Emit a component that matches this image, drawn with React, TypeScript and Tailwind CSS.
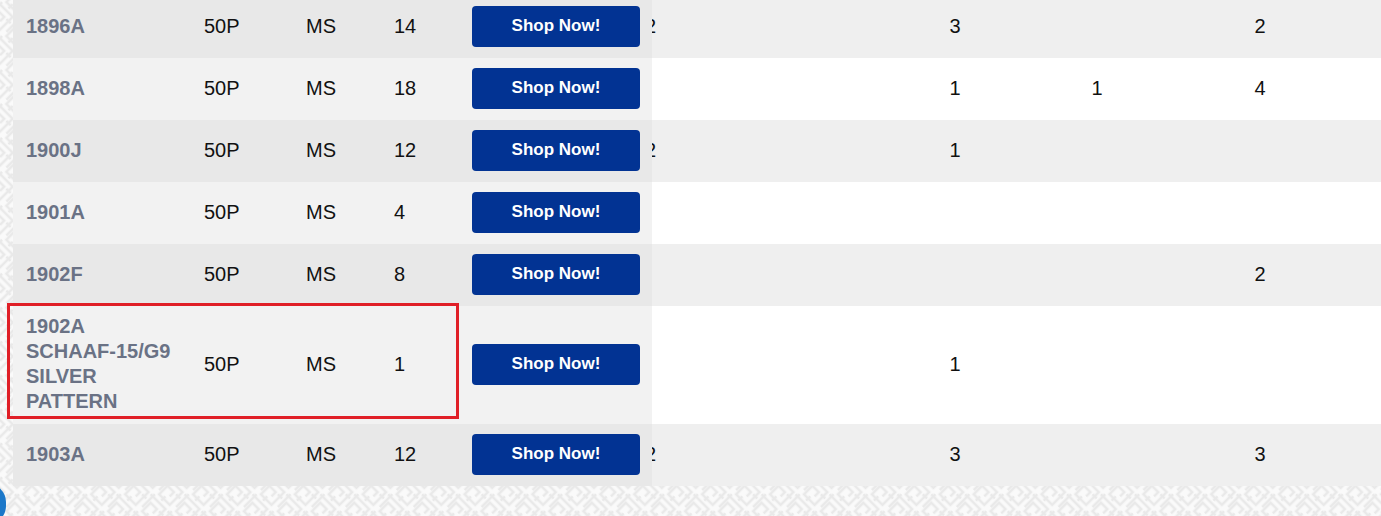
import React from "react";

type Row = {
  name: string[];
  qty: string;
  a?: string;
  b?: string;
  c?: string;
  d?: string;
  tall?: boolean;
};

const rows: Row[] = [
  { name: ["1896A"], qty: "14", a: "2", b: "3", d: "2" },
  { name: ["1898A"], qty: "18", b: "1", c: "1", d: "4" },
  { name: ["1900J"], qty: "12", a: "2", b: "1" },
  { name: ["1901A"], qty: "4" },
  { name: ["1902F"], qty: "8", d: "2" },
  { name: ["1902A", "SCHAAF-15/G9", "SILVER", "PATTERN"], qty: "1", b: "1", tall: true },
  { name: ["1903A"], qty: "12", a: "2", b: "3", d: "3" },
];

function Pattern() {
  return (
    <svg className="absolute inset-0 h-full w-full" xmlns="http://www.w3.org/2000/svg">
      <defs>
        <pattern id="maze" width="24" height="24" patternUnits="userSpaceOnUse" patternTransform="rotate(45)">
          <rect width="24" height="24" fill="#fafafa" />
          <path
            d="M0 3H21V21H6V9H15V15M3 0V18M12 24V18M24 9H18"
            fill="none"
            stroke="#e9e9e9"
            strokeWidth="2.5"
          />
        </pattern>
      </defs>
      <rect width="100%" height="100%" fill="url(#maze)" />
    </svg>
  );
}

export default function App() {
  return (
    <div
      className="relative h-[516px] w-[1381px] overflow-hidden bg-[#fafafa]"
      style={{ fontFamily: '"Liberation Sans", Arial, sans-serif' }}
    >
      <Pattern />
      <div className="relative ml-[13px] mt-[-4px] flex flex-col">
        {rows.map((r, i) => {
          const odd = i % 2 === 0;
          return (
            <div key={i} className={`flex ${r.tall ? "h-[118px]" : "h-[62px]"}`}>
              <div
                className={`relative z-10 flex w-[639px] shrink-0 items-center pb-[2px] ${
                  odd ? "bg-[#e8e8e8]" : "bg-[#f2f2f2]"
                }`}
              >
                <div className="w-[178px] pl-[13px] pr-[2px] text-[20px] font-bold leading-[25px] text-[#6a7285]">
                  {r.name.map((n, k) => (
                    <div key={k}>{n}</div>
                  ))}
                </div>
                <div className="w-[102px] pl-[13px] text-[20px] text-[#111]">50P</div>
                <div className="w-[88px] pl-[13px] text-[20px] text-[#111]">MS</div>
                <div className="w-[78px] pl-[13px] text-[20px] text-[#111]">{r.qty}</div>
                <div className="pl-[13px]">
                  <button className="flex h-[41px] w-[168px] items-center justify-center rounded-[4px] bg-[#023393] text-[17px] font-bold text-white">
                    Shop Now!
                  </button>
                </div>
              </div>
              <div
                className={`-ml-[12px] flex flex-1 items-center pb-[2px] text-[20px] text-[#111] ${
                  odd ? "bg-[#efefef]" : "bg-white"
                }`}
              >
                <div className="w-[240px] pl-[5px]">{r.a}</div>
                <div className="w-[150px] text-center">{r.b}</div>
                <div className="w-[134px] text-center">{r.c}</div>
                <div className="w-[192px] text-center">{r.d}</div>
              </div>
            </div>
          );
        })}
      </div>
      <div className="absolute left-[7px] top-[303px] z-20 h-[116px] w-[452px] border-[3px] border-[#e01f27]" />
      <div className="absolute left-[-30px] top-[484px] z-20 h-[40px] w-[36px] rounded-full bg-[#1c78c9]" />
    </div>
  );
}
